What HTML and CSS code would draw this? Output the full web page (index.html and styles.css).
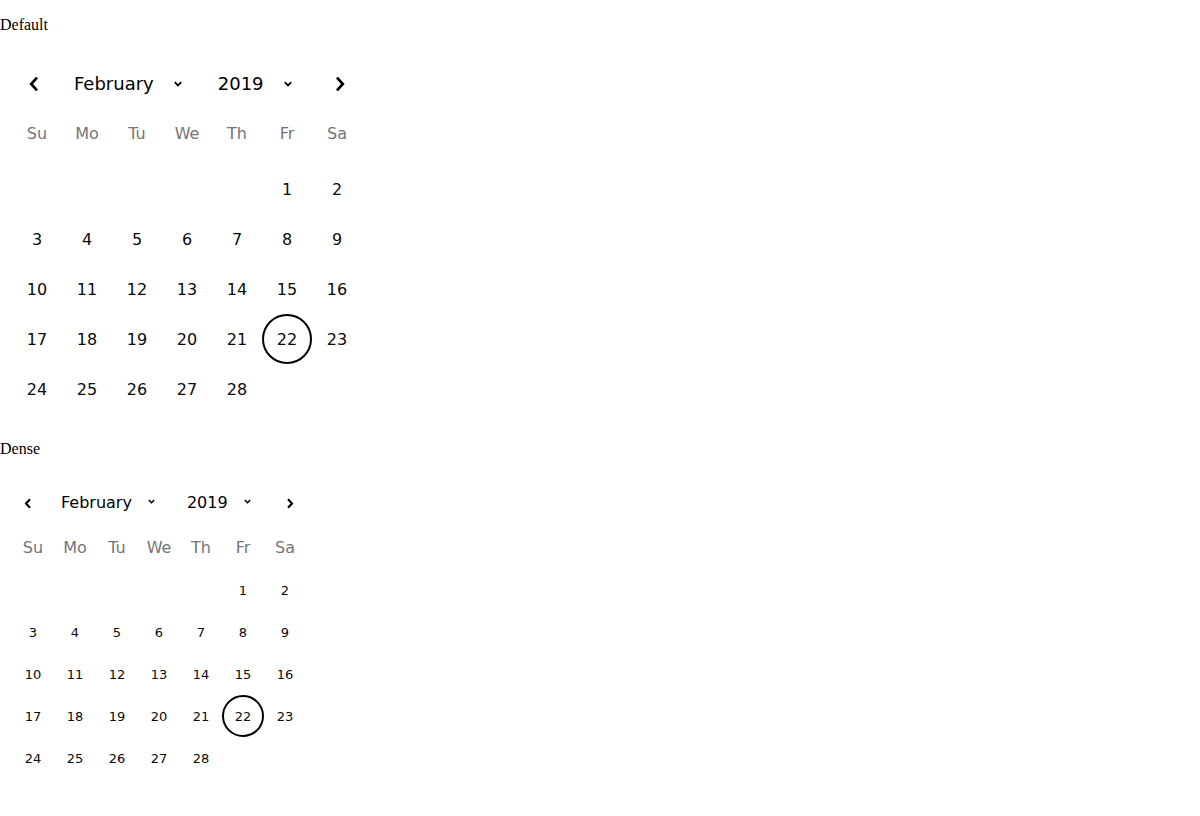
FILE: index.html
```html
<!DOCTYPE html>
<html>
<head>
<meta charset="utf-8">
<link rel="stylesheet" href="styles.css">
</head>
<body>
<div class="label">Default</div>
<div class="cal">
  <div class="cal-head">
    <button class="nav"><svg width="14" height="16" viewBox="0 0 14 16"><polyline points="10,1.6 4.2,8 10,14.4" fill="none" stroke="#000" stroke-width="2.7"/></svg></button>
    <div class="sel"><span>February</span><svg class="dd" width="8" height="6" viewBox="0 0 8 6"><polyline points="0.8,1.2 4,4.4 7.2,1.2" fill="none" stroke="#000" stroke-width="1.8"/></svg></div>
    <div class="sel sel-year"><span>2019</span><svg class="dd" width="8" height="6" viewBox="0 0 8 6"><polyline points="0.8,1.2 4,4.4 7.2,1.2" fill="none" stroke="#000" stroke-width="1.8"/></svg></div>
    <div class="spacer"></div>
    <button class="nav"><svg width="14" height="16" viewBox="0 0 14 16"><polyline points="4,1.6 9.8,8 4,14.4" fill="none" stroke="#000" stroke-width="2.7"/></svg></button>
  </div>
  <div class="week"><span>Su</span><span>Mo</span><span>Tu</span><span>We</span><span>Th</span><span>Fr</span><span>Sa</span></div>
  <div class="days">
    <span></span><span></span><span></span><span></span><span></span><span>1</span><span>2</span>
    <span>3</span><span>4</span><span>5</span><span>6</span><span>7</span><span>8</span><span>9</span>
    <span>10</span><span>11</span><span>12</span><span>13</span><span>14</span><span>15</span><span>16</span>
    <span>17</span><span>18</span><span>19</span><span>20</span><span>21</span><span class="selected">22</span><span>23</span>
    <span>24</span><span>25</span><span>26</span><span>27</span><span>28</span><span></span><span></span>
  </div>
</div>

<div class="label label-dense">Dense</div>
<div class="cal dense">
  <div class="cal-head">
    <button class="nav"><svg width="10" height="11" viewBox="0 0 10 11"><polyline points="7,1.2 3,5.5 7,9.8" fill="none" stroke="#000" stroke-width="2.1"/></svg></button>
    <div class="sel sel-month"><span>February</span><svg class="dd" width="7" height="5" viewBox="0 0 7 5"><polyline points="0.8,1 3.5,3.7 6.2,1" fill="none" stroke="#000" stroke-width="1.6"/></svg></div>
    <div class="sel"><span>2019</span><svg class="dd" width="7" height="5" viewBox="0 0 7 5"><polyline points="0.8,1 3.5,3.7 6.2,1" fill="none" stroke="#000" stroke-width="1.6"/></svg></div>
    <div class="spacer"></div>
    <button class="nav"><svg width="10" height="11" viewBox="0 0 10 11"><polyline points="3,1.2 7,5.5 3,9.8" fill="none" stroke="#000" stroke-width="2.1"/></svg></button>
  </div>
  <div class="week"><span>Su</span><span>Mo</span><span>Tu</span><span>We</span><span>Th</span><span>Fr</span><span>Sa</span></div>
  <div class="days">
    <span></span><span></span><span></span><span></span><span></span><span>1</span><span>2</span>
    <span>3</span><span>4</span><span>5</span><span>6</span><span>7</span><span>8</span><span>9</span>
    <span>10</span><span>11</span><span>12</span><span>13</span><span>14</span><span>15</span><span>16</span>
    <span>17</span><span>18</span><span>19</span><span>20</span><span>21</span><span class="selected">22</span><span>23</span>
    <span>24</span><span>25</span><span>26</span><span>27</span><span>28</span><span></span><span></span>
  </div>
</div>
</body>
</html>
```

FILE: styles.css
```css
html, body {
  margin: 0;
  padding: 0;
  background: #fff;
}

body {
  font-family: "Liberation Serif", "Times New Roman", serif;
  font-size: 16px;
  color: #000;
}

.label {
  margin-top: 16px;
  line-height: 18px;
  height: 18px;
}

.label-dense {
  margin-top: 26px;
}

.cal {
  font-family: "DejaVu Sans", sans-serif;
  padding: 0 12px;
  width: 350px;
}

.cal-head {
  display: flex;
  align-items: center;
  height: 48px;
  margin-top: 26px;
  font-size: 18px;
  color: #000;
}

.nav {
  width: 44px;
  height: 48px;
  padding: 0;
  border: 0;
  background: none;
  display: flex;
  align-items: center;
  justify-content: center;
}

.nav svg {
  display: block;
}

.sel {
  display: flex;
  align-items: center;
  gap: 20px;
  padding: 0 18px;
  line-height: 22px;
}

.dd {
  display: block;
}

.spacer {
  flex: 1;
}

.week {
  display: grid;
  grid-template-columns: repeat(7, 50px);
  height: 50px;
  align-items: center;
  font-size: 16px;
  color: #757575;
}

.week span {
  text-align: center;
}

.days {
  display: grid;
  grid-template-columns: repeat(7, 50px);
  grid-auto-rows: 50px;
  margin-top: 6px;
  font-size: 16px;
  color: #0a0a0a;
}

.days span {
  display: flex;
  align-items: center;
  justify-content: center;
  box-sizing: border-box;
  border-radius: 50%;
}

.days .selected {
  border: 2px solid #000;
}

/* Dense variant */
.dense {
  width: 294px;
}

.dense .cal-head {
  height: 42px;
  margin-top: 24px;
  font-size: 16px;
}

.dense .nav {
  width: 32px;
  height: 42px;
}

.dense .sel {
  gap: 16px;
  padding: 0 16px;
}

.dense .sel-month {
  padding-left: 17px;
}

.dense .dd {
  margin-top: -3px;
}

.dense .week {
  grid-template-columns: repeat(7, 42px);
  height: 42px;
  margin-top: 2px;
}

.dense .days {
  grid-template-columns: repeat(7, 42px);
  grid-auto-rows: 42px;
  margin-top: 1px;
  font-size: 13px;
}
```
